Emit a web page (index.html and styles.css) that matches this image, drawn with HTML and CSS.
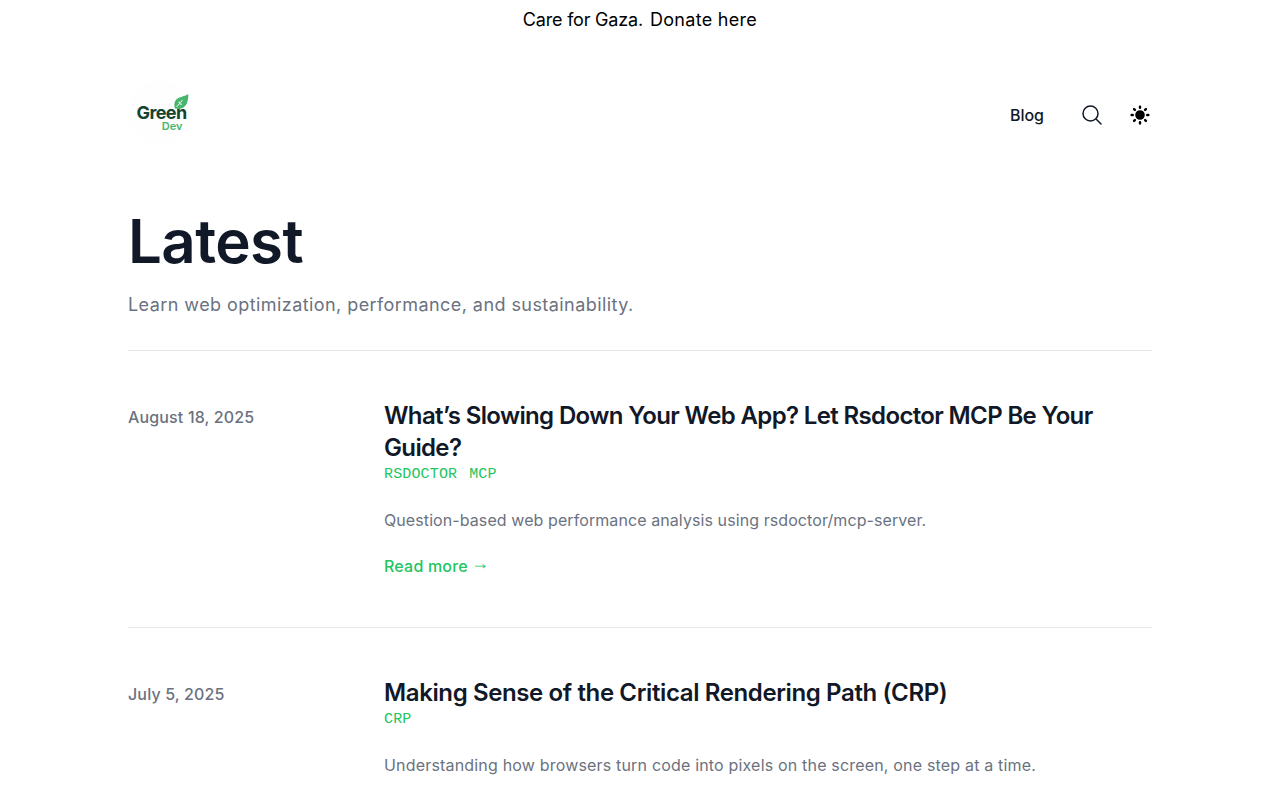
FILE: index.html
```html
<!DOCTYPE html>
<html lang="en">
<head>
<meta charset="utf-8">
<title>Green Dev</title>
<link rel="stylesheet" href="styles.css">
</head>
<body>
<div class="banner"><span class="banner-text">Care for Gaza.</span> <a class="banner-link" href="#">Donate here</a></div>
<div class="wrap">
  <header class="header">
    <a class="logo" href="#" aria-label="Green Dev">
      <svg viewBox="0 0 64 64" width="64" height="64">
        <circle class="logo-bg" cx="32" cy="32" r="32"/>
        <path class="leaf" d="M60.300 13C56 16 50 15.500 47.500 19.500 46 22 46 25 47 27.500 52 29 57 27 59 22 60 19 60.500 16 60.300 13z"/>
        <path class="leaf-vein" d="M48.500 26l6-7M51 20.500l.5 2.500 2.500.2"/>
        <text class="logo-green" x="8.500" y="38">Green</text>
        <text class="logo-dev" x="33.800" y="48.500">Dev</text>
      </svg>
    </a>
    <nav class="nav">
      <a class="nav-link" href="#">Blog</a>
      <button class="icon-btn" aria-label="Search">
        <svg class="icon-search" viewBox="0 0 24 24" width="24" height="24"><path d="M21 21l-5.197-5.197m0 0A7.5 7.5 0 105.196 5.196a7.5 7.5 0 0010.607 10.607z"/></svg>
      </button>
      <button class="icon-btn" aria-label="Theme">
        <svg class="icon-sun" viewBox="0 0 20 20" width="24" height="24"><path d="M10 2a1 1 0 011 1v1a1 1 0 11-2 0V3a1 1 0 011-1zm4 8a4 4 0 11-8 0 4 4 0 018 0zm-.464 4.950l.707.707a1 1 0 001.414-1.414l-.707-.707a1 1 0 00-1.414 1.414zm2.120-10.607a1 1 0 010 1.414l-.706.707a1 1 0 11-1.414-1.414l.707-.707a1 1 0 011.414 0zM17 11a1 1 0 100-2h-1a1 1 0 100 2h1zm-7 4a1 1 0 011 1v1a1 1 0 11-2 0v-1a1 1 0 011-1zM5.050 6.464A1 1 0 106.465 5.050l-.708-.707a1 1 0 00-1.414 1.414l.707.707zm1.414 8.486l-.707.707a1 1 0 01-1.414-1.414l.707-.707a1 1 0 011.414 1.414zM4 11a1 1 0 100-2H3a1 1 0 000 2h1z"/></svg>
      </button>
    </nav>
  </header>
  <main>
    <section class="intro">
      <h1 class="page-title">Latest</h1>
      <p class="page-sub">Learn web optimization, performance, and sustainability.</p>
    </section>
    <article class="post">
      <div class="post-date">August 18, 2025</div>
      <div class="post-body">
        <h2 class="post-title post-title-long">What’s Slowing Down Your Web App? Let Rsdoctor MCP Be Your Guide?</h2>
        <div class="tags"><a href="#">RSDOCTOR</a><a href="#">MCP</a></div>
        <p class="post-desc">Question-based web performance analysis using rsdoctor/mcp-server.</p>
        <a class="read-more" href="#">Read more <span class="arrow">→</span></a>
      </div>
    </article>
    <article class="post">
      <div class="post-date">July 5, 2025</div>
      <div class="post-body">
        <h2 class="post-title">Making Sense of the Critical Rendering Path (CRP)</h2>
        <div class="tags"><a href="#">CRP</a></div>
        <p class="post-desc post-desc-wide">Understanding how browsers turn code into pixels on the screen, one step at a time.</p>
      </div>
    </article>
  </main>
</div>
</body>
</html>
```
FILE: styles.css
```css
* { box-sizing: border-box; }
html, body { margin: 0; padding: 0; height: 800px; overflow: hidden; }
body { background: #fff; color: #111827; font-family: "Inter", "Liberation Sans", sans-serif; }
a { color: inherit; text-decoration: none; }
.banner { height: 40px; text-align: center; font-size: 18px; line-height: 40px; color: #000; }
.banner-text { letter-spacing: -0.2px; }
.banner-link { letter-spacing: 0.3px; margin-left: 2px; }
.wrap { width: 1024px; margin: 0 auto; }
.header { height: 149px; display: flex; align-items: center; justify-content: space-between; padding-top: 1px; }
.logo { display: block; width: 64px; height: 64px; margin-top: -4px; }
.logo-bg { fill: #fdfefd; }
.leaf { fill: #48b56d; }
.leaf-vein { fill: none; stroke: #fff; stroke-width: 0.9; }
.logo-green { font: 700 18px "Inter", sans-serif; fill: #14432f; letter-spacing: -0.6px; }
.logo-dev { font: 600 11px "Inter", sans-serif; fill: #48b56d; }
.nav { display: flex; align-items: center; }
.nav-link { font-size: 16px; font-weight: 500; margin-right: 36px; }
.icon-btn { width: 24px; height: 24px; padding: 0; border: 0; background: none; display: block; }
.icon-btn + .icon-btn { margin-left: 24px; }
.icon-btn svg { display: block; }
.icon-search { fill: none; stroke: #111827; stroke-width: 1.5; stroke-linecap: round; stroke-linejoin: round; }
.icon-sun { fill: #000; }
.intro { padding-top: 22px; height: 162px; border-bottom: 1px solid #e5e7eb; }
.page-title { margin: 0; font-size: 60px; line-height: 60px; font-weight: 600; letter-spacing: -0.6px; color: #111827; height: 60px; }
.page-sub { margin: 20px 0 0; font-size: 18px; line-height: 28px; letter-spacing: 0.43px; color: #6b7280; }
.post { display: flex; padding: 48px 0 47px; border-bottom: 1px solid #e5e7eb; }
.post-date { width: 256px; flex: none; font-size: 16px; font-weight: 500; line-height: 24px; letter-spacing: 0.15px; color: #6b7280; padding-top: 6px; }
.post-body { flex: 1; padding-top: 1px; }
.post-title { margin: 0; font-size: 24px; line-height: 32px; font-weight: 600; letter-spacing: -0.38px; color: #111827; }
.post-title-long { letter-spacing: -0.64px; }
.tags { display: flex; gap: 12px; margin-top: 1px; font-family: "Liberation Mono", monospace; font-size: 15px; line-height: 20px; letter-spacing: 0.15px; color: #22c55e; }
.post-desc { margin: 21px 0 0; font-size: 16px; line-height: 28px; letter-spacing: 0.085px; color: #6b7280; }
.post-desc-wide { letter-spacing: 0.18px; }
.read-more { display: block; margin-top: 18px; font-size: 16px; font-weight: 500; line-height: 28px; letter-spacing: 0.2px; color: #22c55e; }
.arrow { font-family: "Liberation Sans", sans-serif; font-size: 18px; line-height: 0; font-weight: 400; letter-spacing: 0; margin-left: -1.500px; vertical-align: 3px; }
```
